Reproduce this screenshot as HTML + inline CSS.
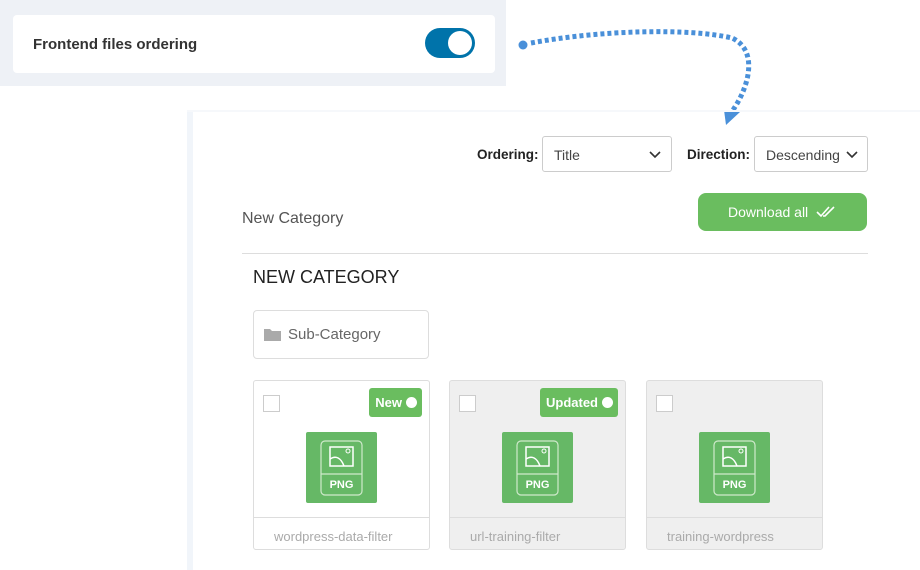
<!DOCTYPE html>
<html><head><style>
*{box-sizing:border-box;margin:0;padding:0}
body{width:920px;height:570px;background:#fff;position:relative;overflow:hidden;font-family:"Liberation Sans",sans-serif}
.top{position:absolute;left:0;top:0;width:506px;height:86px;background:#eef1f6}
.card{position:absolute;left:13px;top:15px;width:482px;height:58px;background:#fff;border-radius:4px}
.card span{position:absolute;left:20px;top:21px;font-size:15px;font-weight:bold;color:#333}
.tog{position:absolute;left:412px;top:13px;width:50px;height:30px;background:#0073aa;border-radius:15px}
.tog i{position:absolute;right:3px;top:3px;width:24px;height:24px;border-radius:50%;background:#fff}
.strip{position:absolute;left:187px;top:112px;width:6px;height:458px;background:#f1f5fa}
.stript{position:absolute;left:187px;top:110px;width:733px;height:2px;background:#f6f8fb}
.lbl{position:absolute;font-size:13.5px;font-weight:bold;color:#222}
.sel{position:absolute;height:36px;border:1px solid #ccc;border-radius:3px;font-size:14px;color:#444;padding:10px 0 0 11px}
.sel svg{position:absolute;right:10px;top:14px}
.btn{position:absolute;left:698px;top:193px;width:169px;height:38px;background:#6abd5f;border-radius:8px;color:#fff;font-size:14px;padding:11px 0 0 30px}
.fc{position:absolute;top:380px;width:177px;height:170px;border:1px solid #ddd;border-radius:3px;background:#fff}
.fc.g{background:#efefef}
.cb{position:absolute;left:9px;top:14px;width:17px;height:17px;border:1px solid #ccc;background:#fff}
.bd{position:absolute;right:7px;top:7px;height:29px;background:#6abd5f;border-radius:3px;color:#fff;font-weight:bold;font-size:13px;padding:7px 20px 0 6px}
.bd i{position:absolute;right:5px;top:9px;width:11px;height:11px;border-radius:50%;background:#fff}
.ic{position:absolute;left:52px;top:51px;width:71px;height:71px;background:#66b866;border-radius:2px}
.nm{position:absolute;left:0;right:0;top:136px;border-top:1px solid #ddd;font-size:13px;color:#aaa;padding:11px 0 0 20px}
</style></head><body>
<div class="top"><div class="card"><span>Frontend files ordering</span><div class="tog"><i></i></div></div></div>
<svg style="position:absolute;left:0;top:0" width="920" height="570">
<circle cx="523" cy="45" r="4.5" fill="#4a90d9"/>
<path d="M531 43 C600 30 690 28 732 38 C758 50 750 85 733 110" fill="none" stroke="#4a90d9" stroke-width="5" stroke-dasharray="4 3"/>
<path d="M724 110 L740 112 L726 125 Z" fill="#4a90d9"/>
</svg>
<div class="stript"></div><div class="strip"></div>
<div class="lbl" style="left:477px;top:147px">Ordering:</div>
<div class="sel" style="left:542px;top:136px;width:130px">Title<svg width="12" height="8"><path d="M1 1l5 5 5-5" stroke="#333" stroke-width="1.6" fill="none"/></svg></div>
<div class="lbl" style="left:687px;top:147px">Direction:</div>
<div class="sel" style="left:754px;top:136px;width:114px">Descending<svg width="12" height="8" style="right:9px"><path d="M1 1l5 5 5-5" stroke="#333" stroke-width="1.6" fill="none"/></svg></div>
<div style="position:absolute;left:242px;top:210px;font-size:16px;color:#555">New Category</div>
<div class="btn">Download all <svg width="20" height="12" style="vertical-align:-1px;margin-left:4px"><path d="M1 6l4 4 8-9M7 10l2 0 9-9" stroke="#fff" stroke-width="1.6" fill="none"/></svg></div>
<div style="position:absolute;left:242px;top:253px;width:626px;height:1px;background:#ddd"></div>
<div style="position:absolute;left:253px;top:267px;font-size:18px;color:#222">NEW CATEGORY</div>
<div style="position:absolute;left:253px;top:310px;width:176px;height:49px;border:1px solid #ddd;border-radius:4px;font-size:15px;color:#666;padding:15px 0 0 34px">
<svg width="17" height="13" style="position:absolute;left:10px;top:17px"><path d="M0 1h6l2 2h9v10H0z" fill="#aaa"/></svg>Sub-Category</div>
<div class="fc" style="left:253px"><div class="cb"></div><div class="bd">New<i></i></div><div class="ic"><svg width="71" height="71"><rect x="15" y="9" width="41" height="54" rx="4" fill="none" stroke="#cfe9cb" stroke-width="1.2"/><line x1="15" y1="42" x2="56" y2="42" stroke="#cfe9cb" stroke-width="1.2"/><rect x="24" y="15" width="23" height="19" fill="none" stroke="#fff" stroke-width="1.5"/><path d="M24 27c6-4 11-1 14 7" stroke="#fff" stroke-width="1.5" fill="none"/><circle cx="42" cy="19" r="2" fill="none" stroke="#fff"/><text x="35.5" y="56" text-anchor="middle" font-size="11" font-weight="bold" fill="#fff" font-family="Liberation Sans">PNG</text></svg></div><div class="nm">wordpress-data-filter</div></div>
<div class="fc g" style="left:449px"><div class="cb"></div><div class="bd">Updated<i></i></div><div class="ic"><svg width="71" height="71"><rect x="15" y="9" width="41" height="54" rx="4" fill="none" stroke="#cfe9cb" stroke-width="1.2"/><line x1="15" y1="42" x2="56" y2="42" stroke="#cfe9cb" stroke-width="1.2"/><rect x="24" y="15" width="23" height="19" fill="none" stroke="#fff" stroke-width="1.5"/><path d="M24 27c6-4 11-1 14 7" stroke="#fff" stroke-width="1.5" fill="none"/><circle cx="42" cy="19" r="2" fill="none" stroke="#fff"/><text x="35.5" y="56" text-anchor="middle" font-size="11" font-weight="bold" fill="#fff" font-family="Liberation Sans">PNG</text></svg></div><div class="nm">url-training-filter</div></div>
<div class="fc g" style="left:646px"><div class="cb"></div><div class="ic"><svg width="71" height="71"><rect x="15" y="9" width="41" height="54" rx="4" fill="none" stroke="#cfe9cb" stroke-width="1.2"/><line x1="15" y1="42" x2="56" y2="42" stroke="#cfe9cb" stroke-width="1.2"/><rect x="24" y="15" width="23" height="19" fill="none" stroke="#fff" stroke-width="1.5"/><path d="M24 27c6-4 11-1 14 7" stroke="#fff" stroke-width="1.5" fill="none"/><circle cx="42" cy="19" r="2" fill="none" stroke="#fff"/><text x="35.5" y="56" text-anchor="middle" font-size="11" font-weight="bold" fill="#fff" font-family="Liberation Sans">PNG</text></svg></div><div class="nm">training-wordpress</div></div>
</body></html>
